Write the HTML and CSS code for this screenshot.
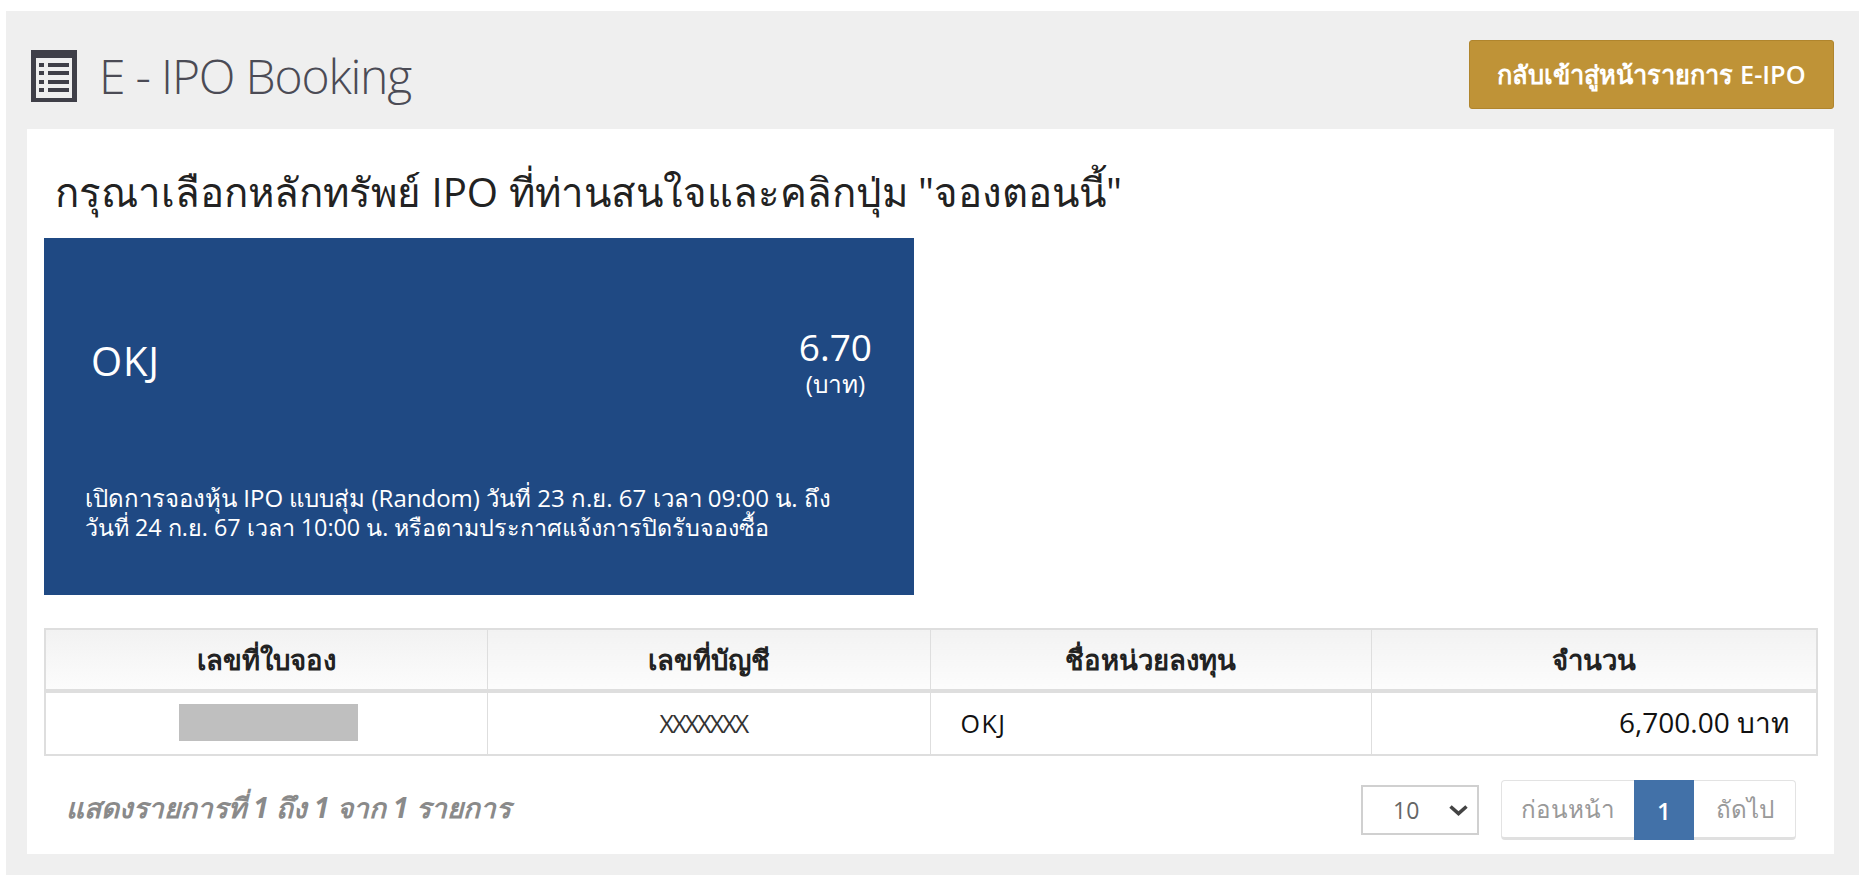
FILE: index.html
```html
<!DOCTYPE html>
<html lang="th">
<head>
<meta charset="utf-8">
<title>E - IPO Booking</title>
<link rel="stylesheet" href="styles.css">
</head>
<body>
<main class="panel">
  <header class="top">
    <h1 class="title">
      <svg class="title-icon" viewBox="0 0 46 52" aria-hidden="true">
        <path fill="#3f3f48" fill-rule="evenodd" d="M0 0H46V52H0ZM5 8V48H41V8Z"/>
        <path fill="#3f3f48" d="M8 13h5v4H8zM17 13h21v4H17zM8 21h5v4H8zM17 21h21v4H17zM8 30h5v4H8zM17 30h21v4H17zM8 38h5v4H8zM17 38h21v4H17z"/>
      </svg>
      <span class="title-text">E - IPO Booking</span>
    </h1>
    <a class="back" href="#">กลับเข้าสู่หน้ารายการ E-IPO</a>
  </header>
  <section class="card">
    <h2 class="lead">กรุณาเลือกหลักทรัพย์ IPO ที่ท่านสนใจและคลิกปุ่ม "จองตอนนี้"</h2>
    <article class="ipo">
      <div class="ipo-row">
        <div class="ipo-name">OKJ</div>
        <div class="ipo-price"><div class="price">6.70</div><div class="unit">(บาท)</div></div>
      </div>
      <div class="ipo-note"><p class="note-a">เปิดการจองหุ้น IPO แบบสุ่ม (Random) วันที่ 23 ก.ย. 67 เวลา 09:00 น. ถึง</p><p class="note-b">วันที่ 24 ก.ย. 67 เวลา 10:00 น. หรือตามประกาศแจ้งการปิดรับจองซื้อ</p></div>
    </article>
    <table class="grid">
      <thead>
        <tr><th>เลขที่ใบจอง</th><th>เลขที่บัญชี</th><th>ชื่อหน่วยลงทุน</th><th>จำนวน</th></tr>
      </thead>
      <tbody>
        <tr>
          <td class="center"><span class="redact"></span></td>
          <td class="center acct">XXXXXXX</td>
          <td class="fund">OKJ</td>
          <td class="amount">6,700.00 บาท</td>
        </tr>
      </tbody>
    </table>
    <footer class="foot">
      <div class="info">แสดงรายการที่ 1 ถึง 1 จาก 1 รายการ</div>
      <div class="controls">
        <div class="size"><span>10</span>
          <svg class="chev" viewBox="0 0 19 11" aria-hidden="true"><path d="M1.5 1.5l8 7 8-7" fill="none" stroke="#444" stroke-width="3.6"/></svg>
        </div>
        <nav class="pager">
          <a class="page wide" href="#">ก่อนหน้า</a><a class="page current" href="#">1</a><a class="page next" href="#">ถัดไป</a>
        </nav>
      </div>
    </footer>
  </section>
</main>
</body>
</html>
```
FILE: styles.css
```css
* { box-sizing: border-box; }
html, body { margin: 0; background: #fff; }
body { padding: 11px 7px 7px 6px; font-family: "Open Sans", "Noto Sans", sans-serif; color: #111; }
.panel { background: #efefef; height: 864px; padding: 0 25px 21px 21px; display: flex; flex-direction: column; }
.top { height: 118px; display: flex; align-items: flex-start; justify-content: space-between; }
.title { margin: 39px 0 0 4px; display: flex; align-items: center; gap: 22px; font-weight: 300; }
.title-icon { width: 46px; height: 52px; flex: none; }
.title-text { font-size: 48px; line-height: 50px; color: #4b4b55; letter-spacing: -1.2px; }
.back { margin-top: 29px; width: 365px; height: 69px; display: flex; align-items: center; justify-content: center; background: #bf9337; border: 1px solid #b0852d; border-radius: 3px; color: #fff; font-size: 25.4px; font-weight: 600; text-decoration: none; }
.card { flex: 1; background: #fff; padding: 0 17px; display: flex; flex-direction: column; }
.lead { margin: 41px 0 0 11px; height: 68px; font-weight: 400; font-size: 40.2px; line-height: 44px; color: #222; white-space: nowrap; }
.ipo { width: 870px; height: 357px; background: #1f4983; color: #fff; padding: 89px 42px 0 41px; display: flex; flex-direction: column; }
.ipo-row { display: flex; justify-content: space-between; }
.ipo-name { font-size: 40px; line-height: 44px; margin-top: 12px; margin-left: 6px; letter-spacing: 0.8px; }
.ipo-price { text-align: center; }
.price { font-size: 37px; line-height: 40px; }
.unit { font-size: 24.4px; line-height: 30px; margin-top: 2px; }
.ipo-note { margin: 85px 0 0; white-space: nowrap; }
.note-a { margin: 0; font-size: 24px; line-height: 28.5px; }
.note-b { margin: 0; font-size: 23.3px; line-height: 28.5px; }
.grid { width: 1772px; margin-top: 33px; border-collapse: collapse; table-layout: fixed; border: 2px solid #dedede; }
.grid th { height: 62px; font-size: 27.5px; font-weight: 700; color: #222; text-align: center; border: 1px solid #dedede; border-bottom: 4px solid #dedede; background: linear-gradient(#f2f2f2, #fcfcfc); }
.grid th:nth-child(1) { width: 442px; }
.grid th:nth-child(2) { width: 443px; }
.grid th:nth-child(3) { width: 441px; }
.grid th:nth-child(4) { width: 446px; }
.grid td { height: 64px; font-size: 22px; border: 1px solid #dedede; padding: 0 0 2px; }
.center { text-align: center; }
.redact { display: inline-block; vertical-align: middle; width: 179px; height: 37px; margin-left: 5px; background: #bfbfbf; }
.acct { color: #333; font-size: 25px !important; letter-spacing: -1.9px; padding-right: 10px !important; }
.fund { padding-left: 30px !important; font-size: 25px !important; letter-spacing: 1.5px; }
.amount { text-align: right; padding-right: 27px !important; font-size: 28px !important; color: #111; }
.foot { display: flex; justify-content: space-between; align-items: center; margin-top: 24px; padding-right: 21px; }
.info { padding: 0 0 4px 22px; font-size: 27.9px; font-style: italic; font-weight: 700; color: #8a8a8a; white-space: nowrap; }
.controls { display: flex; align-items: center; gap: 22px; }
.size { width: 118px; height: 50px; display: flex; align-items: center; justify-content: space-between; padding: 0 9px 0 30px; border: 2px solid #d0d0d0; font-size: 23px; color: #666; }
.chev { width: 19px; height: 11px; }
.pager { display: flex; height: 60px; border: 1px solid #e3e3e3; border-bottom: 3px solid #e0e0e0; border-radius: 4px; }
.page { display: flex; align-items: center; justify-content: center; font-size: 24.2px; color: #999; text-decoration: none; }
.wide { width: 132px; }
.current { width: 60px; height: 60px; margin-top: -1px; background: #4271a8; color: #fff; font-weight: 600; }
.next { width: 101px; }
```
